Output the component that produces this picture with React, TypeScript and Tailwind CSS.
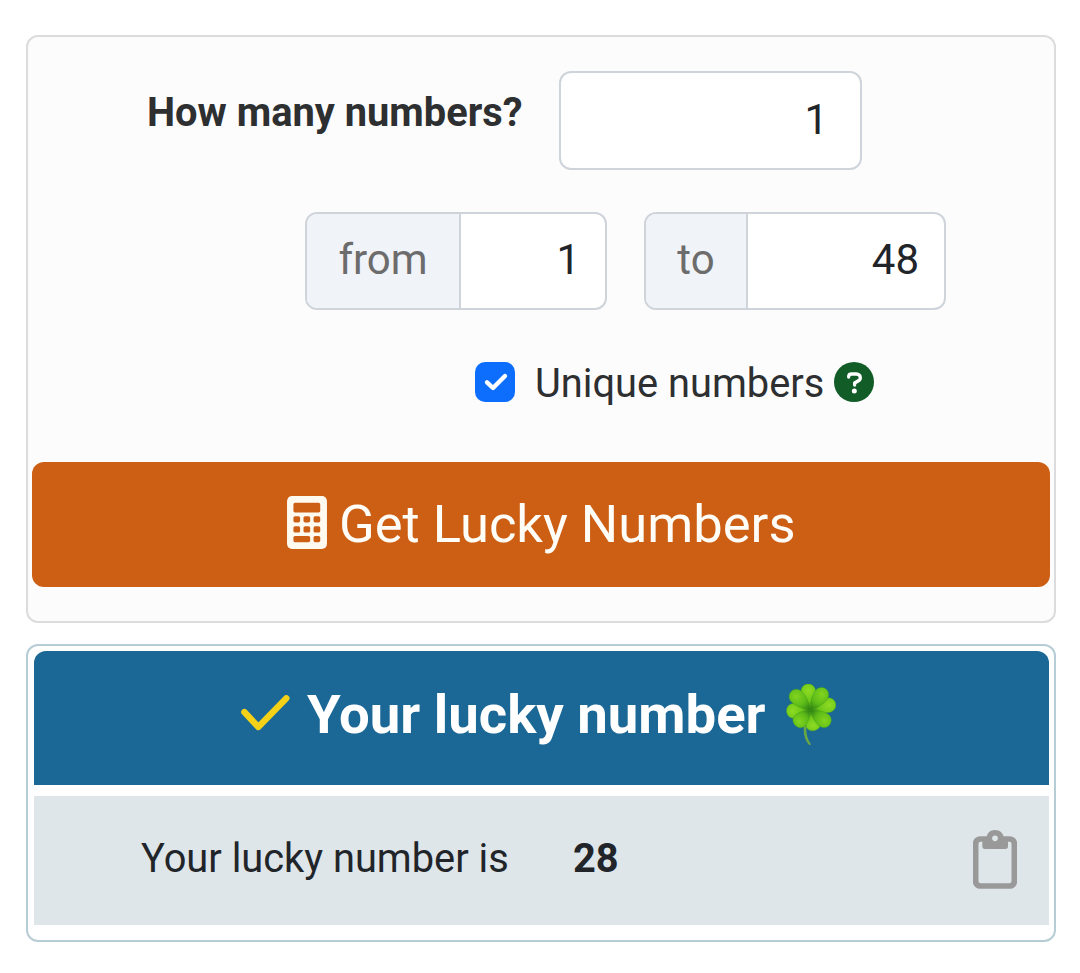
import { useState } from "react";

const petals = [
    { angle: -96, length: 56, fill: "url(#leafA)" },
    { angle: 177, length: 51, fill: "url(#leafA)" },
    { angle: 79, length: 45, fill: "url(#leafA)" },
    { angle: -15, length: 56, fill: "url(#leafA)" },
    { angle: -54, length: 56, fill: "url(#leafB)" },
    { angle: 37, length: 52, fill: "url(#leafB)" },
    { angle: 134, length: 46, fill: "url(#leafB)" },
    { angle: 224, length: 57, fill: "url(#leafB)" },
]

function CalculatorIcon(){
    return(
        <svg viewBox="0 0 119 158" className="w-[40px] h-[53px] shrink-0 mb-[4px]">
            <rect width="119" height="158" rx="15" fill="#fffaf0"></rect>
            <g fill="#cd5f14">
                <rect x="19" y="20" width="80" height="29" rx="5"></rect>
                <rect x="19" y="60" width="20" height="19" rx="5"></rect>
                <rect x="49" y="60" width="20" height="19" rx="5"></rect>
                <rect x="79" y="60" width="20" height="19" rx="5"></rect>
                <rect x="19" y="90" width="20" height="19" rx="5"></rect>
                <rect x="49" y="90" width="20" height="19" rx="5"></rect>
                <rect x="79" y="90" width="20" height="19" rx="5"></rect>
                <rect x="19" y="119" width="50" height="19" rx="5"></rect>
                <rect x="79" y="119" width="20" height="19" rx="5"></rect>
            </g>
        </svg>
    )
}

function QuestionIcon(){
    return(
        <svg viewBox="0 0 120 120" className="w-[40px] h-[40px] shrink-0">
            <circle cx="60" cy="60" r="60" fill="#125c28"></circle>
            <path d="M44 45v-1c0-5 4-8 9-8h14c7 0 12 5 12 11 0 5-3 8-7 10l-10 6v6" fill="none" stroke="#fff" strokeWidth="10" strokeLinecap="round" strokeLinejoin="round"></path>
            <circle cx="61" cy="87" r="7.5" fill="#fff"></circle>
        </svg>
    )
}

function CloverIcon(){
    return(
        <svg viewBox="0 0 150 186" className="w-[50px] h-[62px] shrink-0">
            <defs>
                <radialGradient id="leafA" gradientUnits="userSpaceOnUse" cx="54" cy="0" r="58">
                    <stop offset="0" stopColor="#8edb22"></stop>
                    <stop offset="0.5" stopColor="#6cc61a"></stop>
                    <stop offset="1" stopColor="#236f12"></stop>
                </radialGradient>
                <radialGradient id="leafB" gradientUnits="userSpaceOnUse" cx="54" cy="0" r="58">
                    <stop offset="0" stopColor="#82d41e"></stop>
                    <stop offset="0.5" stopColor="#5cba18"></stop>
                    <stop offset="1" stopColor="#1f6b12"></stop>
                </radialGradient>
            </defs>
            <path d="M54 126c-3 20 2 42 16 58l5-3c-12-17-16-37-13-57z" fill="#6aa843"></path>
            {petals.map((petal) => (
                <g key={petal.angle} transform={`translate(73 78) rotate(${petal.angle}) scale(${petal.length / 52} 1)`}>
                    <path d="M0 0C14-10 30-22 52-22c12 0 21 10 21 22S64 22 52 22C30 22 14 10 0 0z" fill={petal.fill} stroke="#3c9a16" strokeWidth="1"></path>
                </g>
            ))}
        </svg>
    )
}

function ClipboardIcon(){
    return(
        <svg viewBox="0 0 132 177" className="w-[44px] h-[59px] shrink-0 mb-[3px]">
            <rect x="8" y="27" width="116" height="141" rx="14" fill="none" stroke="#999" strokeWidth="17"></rect>
            <path fill="#999" d="M28 24h13C41 10 51 0 66 0s26 10 26 24h13v25q0 8-8 8H36q-8 0-8-8z"></path>
            <circle cx="66" cy="25" r="8.5" fill="#dee6e9"></circle>
        </svg>
    )
}

export default function App(){
    const [count, setCount] = useState("1")
    const [from, setFrom] = useState("1")
    const [to, setTo] = useState("48")
    const [unique, setUnique] = useState(true)

    return(
        <div className="w-[1080px] h-[973px] bg-white pl-[26px] pt-[35px] pr-[24px] flex flex-col gap-[21px] overflow-hidden font-['Roboto',sans-serif] text-[#212529] whitespace-nowrap">
            <div className="h-[588px] shrink-0 border-2 border-[#dcdcde] rounded-xl bg-[#fcfcfc] px-1 pt-[34px] flex flex-col">
                <div className="flex pl-[115px]">
                    <label htmlFor="count" className="w-[412px] pt-[12px] text-[39.8px] leading-[60px] font-bold text-[#2d2f31]">How many numbers?</label>
                    <input id="count" value={count} onChange={(e) => setCount(e.target.value)} className="w-[303px] h-[99px] border-2 border-[#ced4da] rounded-xl bg-white pr-[32px] pb-0.5 text-right text-[42px] outline-none"></input>
                </div>

                <div className="flex gap-[37px] mt-[42px] pl-[273px] text-[42px]">
                    <div className="w-[302px] h-[98px] flex border-2 border-[#ced4da] rounded-xl overflow-hidden bg-white">
                        <span className="w-[154px] shrink-0 flex items-center justify-center bg-[#f0f3f7] border-r-2 border-[#ced4da] pb-1 text-[#6c6c6c]">from</span>
                        <input value={from} onChange={(e) => setFrom(e.target.value)} className="min-w-0 flex-1 pr-[25px] pb-1 text-right outline-none"></input>
                    </div>
                    <div className="w-[302px] h-[98px] flex border-2 border-[#ced4da] rounded-xl overflow-hidden bg-white">
                        <span className="w-[102px] shrink-0 flex items-center justify-center bg-[#f0f3f7] border-r-2 border-[#ced4da] pb-1 text-[#6c6c6c]">to</span>
                        <input value={to} onChange={(e) => setTo(e.target.value)} className="min-w-0 flex-1 pr-[25px] pb-1 text-right outline-none"></input>
                    </div>
                </div>

                <div className="flex items-center h-[60px] mt-[42px] pl-[443px]">
                    <button onClick={() => setUnique(!unique)} className="w-[40px] h-[40px] shrink-0 rounded-[10px] bg-[#0d6efd] cursor-pointer">
                        {unique && <svg viewBox="0 0 120 120" className="w-[40px] h-[40px]">
                            <path d="M36 61l18 17 36-36" fill="none" stroke="#fff" strokeWidth="13" strokeLinecap="round" strokeLinejoin="round"></path>
                        </svg>}
                    </button>
                    <span className="w-[299px] ml-5 pt-[4px] text-[39.8px] leading-[56px] text-[#2d2f31]">Unique numbers</span>
                    <QuestionIcon></QuestionIcon>
                </div>

                <button className="w-full h-[125px] mt-[50px] flex items-center pl-[255px] rounded-xl bg-[#cd5f14] text-[#fffdf8] text-[52.5px] cursor-pointer">
                    <CalculatorIcon></CalculatorIcon>
                    <span className="ml-[12px]">Get Lucky Numbers</span>
                </button>
            </div>

            <div className="h-[298px] shrink-0 border-2 border-[#b7cdd5] rounded-xl bg-white pl-[6px] pr-[5px] pt-[5px]">
                <div className="h-[134px] flex items-center pl-[207px] pb-[7px] rounded-t-xl bg-[#1b6896] text-white">
                    <svg viewBox="0 0 147 108" className="w-[49px] h-[36px] shrink-0 mb-1">
                        <path d="M10 51l42 45L136 10" fill="none" stroke="#f5d218" strokeWidth="19" strokeLinecap="round" strokeLinejoin="round"></path>
                    </svg>
                    <h2 className="w-[479px] ml-[17px] text-[54.5px] font-bold">Your lucky number</h2>
                    <CloverIcon></CloverIcon>
                </div>
                <div className="h-[129px] mt-[11px] flex items-center pl-[107px] pr-[32px] bg-[#dee6e9] text-[39.8px]">
                    <span className="w-[432px] pb-[3px]">Your lucky number is</span>
                    <span className="flex-1 pb-[3px] font-bold">28</span>
                    <ClipboardIcon></ClipboardIcon>
                </div>
            </div>
        </div>
    )
}
